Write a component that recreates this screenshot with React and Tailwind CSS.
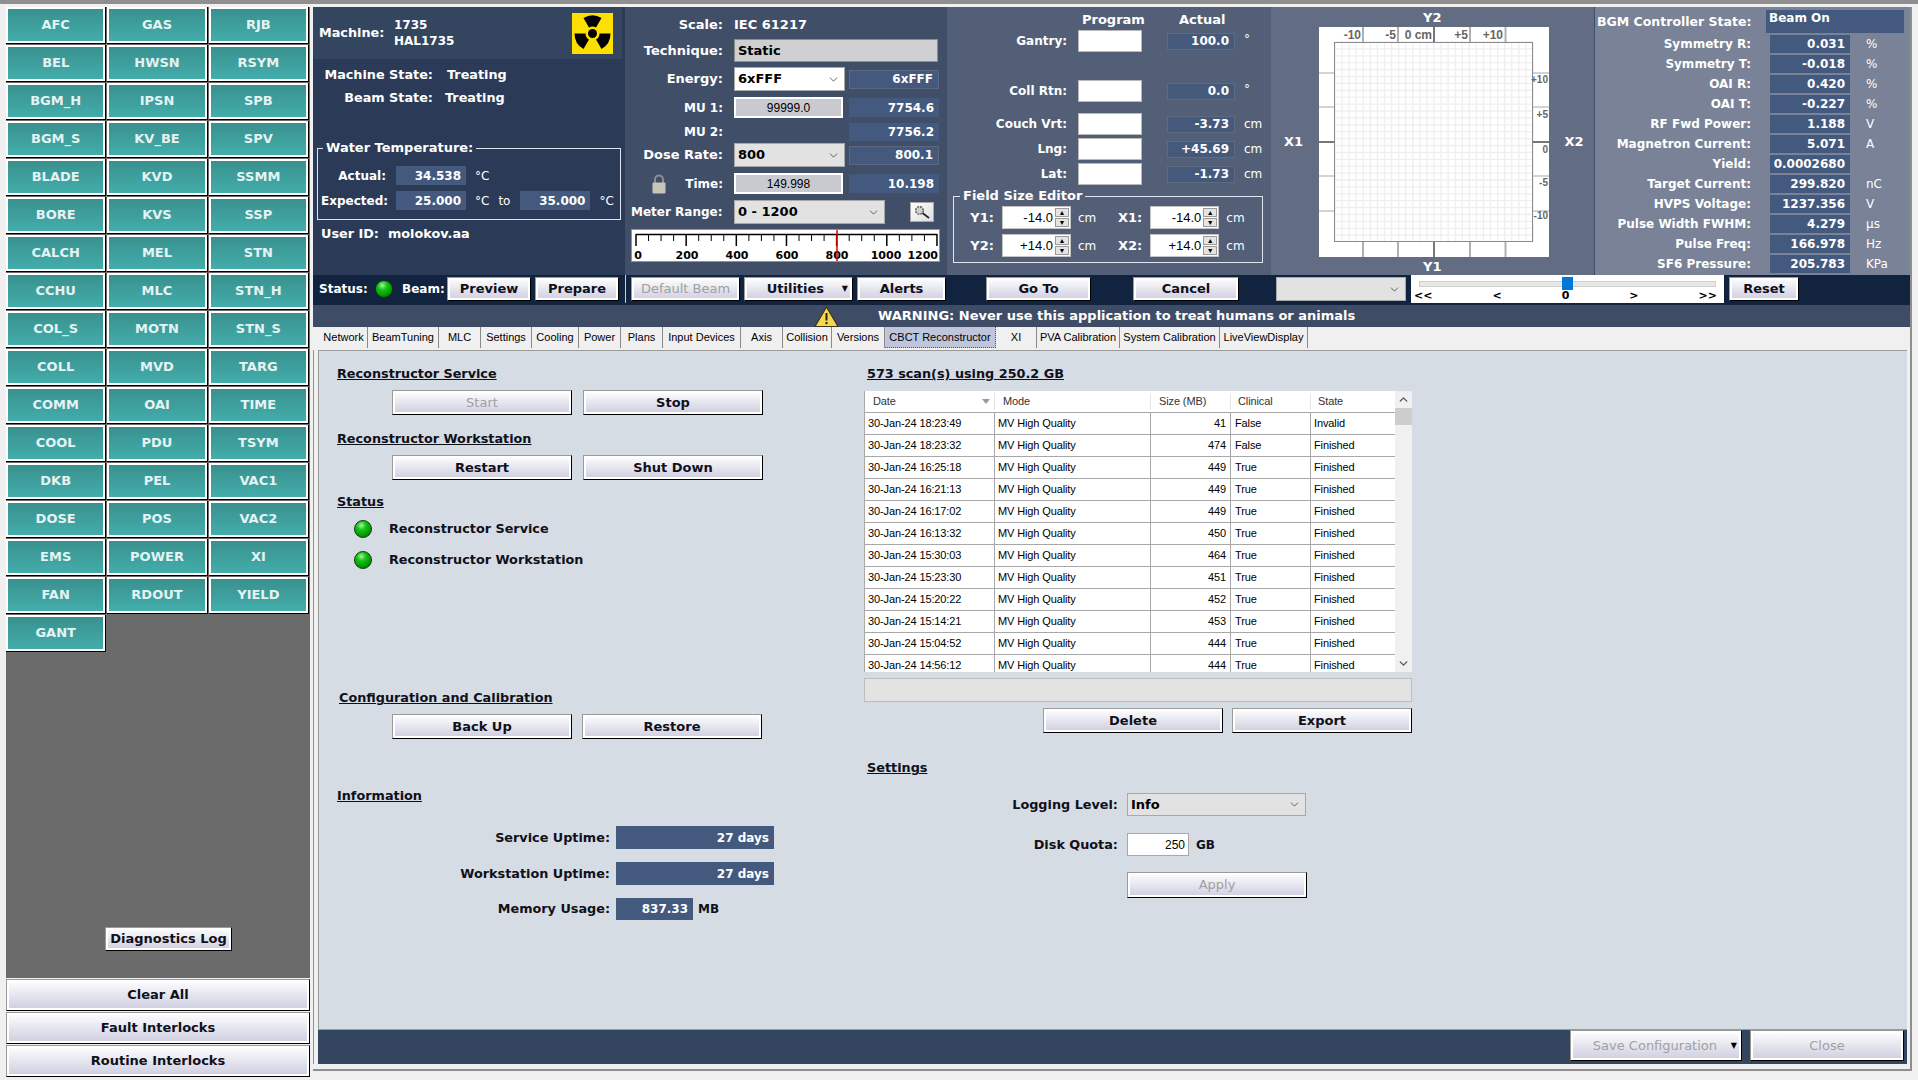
import { ChevronDown, ChevronUp } from "lucide-react";
import React from "react";
import clsx from "clsx";

const interlocks = [
	"AFC", "GAS", "RJB", "BEL", "HWSN", "RSYM", "BGM_H", "IPSN", "SPB", "BGM_S", "KV_BE", "SPV",
	"BLADE", "KVD", "SSMM", "BORE", "KVS", "SSP", "CALCH", "MEL", "STN", "CCHU", "MLC", "STN_H",
	"COL_S", "MOTN", "STN_S", "COLL", "MVD", "TARG", "COMM", "OAI", "TIME", "COOL", "PDU", "TSYM",
	"DKB", "PEL", "VAC1", "DOSE", "POS", "VAC2", "EMS", "POWER", "XI", "FAN", "RDOUT", "YIELD", "GANT",
];

const tabs = [
	["Network", 48], ["BeamTuning", 71], ["MLC", 42], ["Settings", 51], ["Cooling", 47], ["Power", 42],
	["Plans", 42], ["Input Devices", 78], ["Axis", 42], ["Collision", 49], ["Versions", 53],
	["CBCT Reconstructor", 111], ["XI", 41], ["PVA Calibration", 83], ["System Calibration", 100], ["LiveViewDisplay", 88],
];

const scans = [
	["30-Jan-24 18:23:49", "41", "False", "Invalid"],
	["30-Jan-24 18:23:32", "474", "False", "Finished"],
	["30-Jan-24 16:25:18", "449", "True", "Finished"],
	["30-Jan-24 16:21:13", "449", "True", "Finished"],
	["30-Jan-24 16:17:02", "449", "True", "Finished"],
	["30-Jan-24 16:13:32", "450", "True", "Finished"],
	["30-Jan-24 15:30:03", "464", "True", "Finished"],
	["30-Jan-24 15:23:30", "451", "True", "Finished"],
	["30-Jan-24 15:20:22", "452", "True", "Finished"],
	["30-Jan-24 15:14:21", "453", "True", "Finished"],
	["30-Jan-24 15:04:52", "444", "True", "Finished"],
	["30-Jan-24 14:56:12", "444", "True", "Finished"],
];

const bgmRows = [
	["Symmetry R:", "0.031", "%"], ["Symmetry T:", "-0.018", "%"], ["OAI R:", "0.420", "%"], ["OAI T:", "-0.227", "%"],
	["RF Fwd Power:", "1.188", "V"], ["Magnetron Current:", "5.071", "A"], ["Yield:", "0.0002680", ""],
	["Target Current:", "299.820", "nC"], ["HVPS Voltage:", "1237.356", "V"], ["Pulse Width FWHM:", "4.279", "µs"],
	["Pulse Freq:", "166.978", "Hz"], ["SF6 Pressure:", "205.783", "KPa"],
];

const Btn = ({ children, className, disabled }) => (
	<button
		className={clsx(
			"flex shrink-0 items-center justify-center whitespace-nowrap border border-t-[#9a9a9a] border-l-[#9a9a9a] border-r-black border-b-black bg-linear-to-b from-white to-[#cdcde0] text-[13px] font-bold shadow-[inset_0_0_0_2px_#fff]",
			disabled ? "font-normal text-[#a0a0a0]" : "text-[#10101a]",
			className,
		)}
	>
		{children}
	</button>
);

const Led = ({ className }) => (
	<span
		className={clsx(
			"block h-[18px] w-[18px] shrink-0 rounded-full border border-[#0b3b0b] bg-[radial-gradient(circle_at_40%_28%,#a5f5a5_0%,#15c415_30%,#069a06_65%,#045d04_100%)]",
			className,
		)}
	/>
);

const Readout = ({ children, className }) => (
	<div className={clsx("flex shrink-0 items-center justify-end bg-[#43597d] pr-[5px] text-[12px] font-bold text-white", className)}>
		{children}
	</div>
);

const Arrow = ({ className }) => (
	<ChevronDown size={13} strokeWidth={1.5} className={clsx("shrink-0 text-[#444]", className)} />
);

const Combo = ({ value, className, white }) => (
	<div
		className={clsx(
			"flex shrink-0 items-center justify-between border border-[#a8a8a8] pl-[3px] pr-[4px] text-[13px] font-bold text-black",
			white ? "bg-white" : "bg-[#e2e2e2]",
			className,
		)}
	>
		<span>{value}</span>
		<Arrow />
	</div>
);

const Blank = ({ className }) => <div className={clsx("h-[22px] w-[64px] shrink-0 border border-[#b8b8b8] bg-white", className)} />;

const Spin = ({ value }) => (
	<div className="flex h-[23px] w-[69px] shrink-0 items-center justify-end border border-[#c4c4c4] bg-white pr-[1px] font-['Liberation_Sans'] text-[13px] font-normal text-black">
		<span className="mr-[2px]">{value}</span>
		<div className="flex h-[19px] w-[14px] flex-col gap-[1px]">
			<div className="flex flex-1 items-center justify-center border border-[#9a9a9a] bg-[#e4e4e4] text-[7px] leading-none">▲</div>
			<div className="flex flex-1 items-center justify-center border border-[#9a9a9a] bg-[#e4e4e4] text-[7px] leading-none">▼</div>
		</div>
	</div>
);

const RadiationIcon = () => (
	<svg width="41" height="41" viewBox="-20.5 -20.5 41 41" className="shrink-0">
		<rect x="-20.5" y="-20.5" width="41" height="41" fill="#fde000" />
		{[0, 120, 240].map((deg) => (
			<path key={deg} transform={`rotate(${deg})`} d="M-3.5 -6.06 L-9 -15.6 A18 18 0 0 1 9 -15.6 L3.5 -6.06 A7 7 0 0 0 -3.5 -6.06Z" fill="#000" />
		))}
		<circle r="4.5" fill="#000" />
	</svg>
);

const Magnifier = () => (
	<svg width="18" height="14" viewBox="0 0 18 14">
		<circle cx="6.5" cy="5.5" r="3.8" fill="#cfcfcf" stroke="#555" strokeWidth="1.3" strokeDasharray="2 1" />
		<line x1="9.5" y1="8" x2="16" y2="13" stroke="#222" strokeWidth="1.6" />
	</svg>
);

const Ruler = () => {
	const ticks = [];
	for (let i = 0; i <= 24; i++) ticks.push(i);
	return (
		<svg width="309" height="33" className="block border border-[#8d93a3] bg-white">
			<line x1="4" y1="4.5" x2="305" y2="4.5" stroke="#000" strokeWidth="1.5" />
			{ticks.map((i) => {
				const x = 4 + i * 12.54;
				return <line key={i} x1={x} y1="4" x2={x} y2={i % 4 === 0 ? 16 : 11} stroke="#000" strokeWidth={i % 4 === 0 ? 1.5 : 1} />;
			})}
			{[["0", 6], ["200", 55], ["400", 105], ["600", 155], ["800", 205], ["1000", 254]].map(([t, x]) => (
				<text key={t} x={x} y="29" textAnchor="middle" fontSize="11" fontWeight="700" fontFamily="DejaVu Sans">{t}</text>
			))}
			<text x="306" y="29" textAnchor="end" fontSize="11" fontWeight="700" fontFamily="DejaVu Sans">1200</text>
			<line x1="205" y1="0" x2="205" y2="33" stroke="#e00000" strokeWidth="1.5" />
		</svg>
	);
};

const FieldChart = () => {
	const xs = [44, 79, 115, 151, 186.5];
	const ys = [46, 80, 115, 149, 184];
	const grid = [];
	for (let i = 0; i <= 28; i++) {
		grid.push(<line key={`v${i}`} x1={16 + i * 7.07} y1="15" x2={16 + i * 7.07} y2="214" stroke="#efefef" strokeWidth="1.3" />);
		grid.push(<line key={`h${i}`} x1="16" y1={15 + i * 6.9} x2="214" y2={15 + i * 6.9} stroke="#efefef" strokeWidth="1.3" />);
	}
	return (
		<svg width="230" height="230" className="block shrink-0 bg-white">
			{grid}
			<rect x="15.5" y="15.5" width="198" height="199" fill="none" stroke="#8a8a8a" />
			{xs.map((x, i) => (
				<g key={x} stroke={i === 2 ? "#777" : "#b0b0b0"} strokeWidth="2">
					<line x1={x} y1="0" x2={x} y2="15" />
					<line x1={x} y1="215" x2={x} y2="230" />
				</g>
			))}
			{ys.map((y, i) => (
				<g key={y} stroke={i === 2 ? "#777" : "#a8a8a8"} strokeWidth={i === 2 ? 2 : 1}>
					<line x1="0" y1={y} x2="15" y2={y} />
					<line x1="214" y1={y} x2="230" y2={y} />
				</g>
			))}
			<g fontFamily="Liberation Sans" fontSize="12" fill="#666" textAnchor="end">
				<text x="42" y="12">-10</text>
				<text x="77" y="12">-5</text>
				<text x="113" y="12">0 cm</text>
				<text x="149" y="12">+5</text>
				<text x="184" y="12">+10</text>
			</g>
			<g fontFamily="Liberation Sans" fontSize="10" fill="#666" textAnchor="end">
				<text x="229" y="56">+10</text>
				<text x="229" y="91">+5</text>
				<text x="229" y="126">0</text>
				<text x="229" y="159">-5</text>
				<text x="229" y="192">-10</text>
			</g>
		</svg>
	);
};

const MachinePanel = () => (
	<div className="flex h-full w-[312px] shrink-0 flex-col bg-[#2b3b57] text-[12.8px] font-bold text-white">
		<div className="flex h-[52px] w-[309px] items-center bg-[#34455f] pl-[6px] pr-[9px]">
			<span className="w-[75px]">Machine:</span>
			<div className="flex flex-1 flex-col gap-[2px] text-[12px] leading-[14px]">
				<span>1735</span>
				<span>HAL1735</span>
			</div>
			<RadiationIcon />
		</div>
		<div className="mt-[6px] flex h-[20px] items-center">
			<span className="w-[120px] text-right">Machine State:</span>
			<span className="ml-[14px]">Treating</span>
		</div>
		<div className="mt-[3px] flex h-[20px] items-center">
			<span className="w-[120px] text-right">Beam State:</span>
			<span className="ml-[12px]">Treating</span>
		</div>
		<fieldset className="ml-[4px] mt-[32px] h-[80px] w-[304px] border border-[#dfe4ee] pl-[3px] text-[12px]">
			<legend className="ml-[2px] px-[3px] text-[13px] leading-[16px]">Water Temperature:</legend>
			<div className="mt-[10px] flex h-[19px] items-center">
				<span className="w-[65px] text-right">Actual:</span>
				<Readout className="ml-[10px] h-[19px] w-[70px]">34.538</Readout>
				<span className="ml-[9px] font-normal">°C</span>
			</div>
			<div className="mt-[6px] flex h-[19px] items-center">
				<span className="w-[65px] text-right">Expected:</span>
				<Readout className="ml-[10px] h-[19px] w-[70px]">25.000</Readout>
				<span className="ml-[9px] font-normal">°C</span>
				<span className="ml-[9px] font-normal">to</span>
				<Readout className="ml-[10px] h-[19px] w-[70px]">35.000</Readout>
				<span className="ml-[9px] font-normal">°C</span>
			</div>
		</fieldset>
		<div className="ml-[8px] mt-[6px] flex h-[16px] items-center gap-[9px]">
			<span>User ID:</span>
			<span>molokov.aa</span>
		</div>
	</div>
);

const ScaleRow = ({ label, children, className }) => (
	<div className={clsx("flex items-center", className)}>
		<span className="w-[98px] whitespace-nowrap text-right">{label}</span>
		<div className="ml-[11px] flex items-center">{children}</div>
	</div>
);

const ScalePanel = () => (
	<div className="flex h-full w-[322px] shrink-0 flex-col bg-[#414e68] pt-[8px] text-[13px] font-bold text-white">
		<ScaleRow label="Scale:" className="h-[20px]">
			<span>IEC 61217</span>
		</ScaleRow>
		<ScaleRow label="Technique:" className="mt-[4px] h-[23px]">
			<div className="flex h-[23px] w-[204px] items-center border border-[#8e8e8e] bg-[#cfcfd2] pl-[3px] text-black">Static</div>
		</ScaleRow>
		<ScaleRow label="Energy:" className="mt-[5px] h-[24px]">
			<Combo white value="6xFFF" className="h-[24px] w-[111px]" />
			<Readout className="ml-[4px] h-[19px] w-[90px] border border-[#5c6880] bg-[#3e5274]">6xFFF</Readout>
		</ScaleRow>
		<ScaleRow label="MU 1:" className="mt-[6px] h-[21px] text-[12px]">
			<div className="flex h-[21px] w-[109px] items-center justify-center border-2 border-white bg-[#c9cad0] font-['Liberation_Sans'] text-[12px] font-normal text-black">99999.0</div>
			<Readout className="ml-[6px] h-[19px] w-[90px]">7754.6</Readout>
		</ScaleRow>
		<ScaleRow label="MU 2:" className="mt-[5px] h-[18px] text-[12px]">
			<div className="w-[109px]" />
			<Readout className="ml-[6px] h-[18px] w-[90px]">7756.2</Readout>
		</ScaleRow>
		<ScaleRow label="Dose Rate:" className="mt-[2px] h-[24px]">
			<Combo value="800" className="h-[24px] w-[111px]" />
			<Readout className="ml-[4px] h-[19px] w-[90px] border border-[#5c6880] bg-[#3e5274]">800.1</Readout>
		</ScaleRow>
		<div className="mt-[6px] flex h-[21px] items-center text-[12px]">
			<svg width="16" height="20" viewBox="0 0 16 20" className="ml-[26px] shrink-0">
				<path d="M4 9V5.5a4 4 0 0 1 8 0V9" fill="none" stroke="#8d8d8d" strokeWidth="2" />
				<rect x="1.5" y="8.5" width="13" height="11" rx="1" fill="#c9c4b8" />
			</svg>
			<span className="w-[56px] text-right">Time:</span>
			<div className="ml-[11px] flex h-[21px] w-[109px] items-center justify-center border-2 border-white bg-[#c9cad0] font-['Liberation_Sans'] text-[12px] font-normal text-black">149.998</div>
			<Readout className="ml-[6px] h-[19px] w-[90px]">10.198</Readout>
		</div>
		<div className="mt-[6px] flex h-[24px] items-center">
			<span className="ml-[6px] w-[97px] whitespace-nowrap text-[12px]">Meter Range:</span>
			<Combo value="0 - 1200" className="ml-[6px] h-[24px] w-[151px]" />
			<div className="ml-[25px] flex h-[20px] w-[24px] items-center justify-center border border-[#a8a8a8] bg-linear-to-br from-white to-[#dcdcdc]">
				<Magnifier />
			</div>
		</div>
		<div className="ml-[6px] mt-[5px]">
			<Ruler />
		</div>
	</div>
);

const AxisRow = ({ label, value, unit, className }) => (
	<div className={clsx("flex h-[22px] items-center", className)}>
		<span className="w-[120px] text-right">{label}</span>
		<Blank className="ml-[11px]" />
		<Readout className="ml-[25px] h-[17px] w-[68px] border border-[#5d6a80] bg-[#45597b]">{value}</Readout>
		<span className={clsx("ml-[9px] font-normal", unit === "°" && "-mt-[5px]")}>{unit}</span>
	</div>
);

const FieldRow = ({ a, av, b, bv, className }) => (
	<div className={clsx("flex h-[23px] items-center", className)}>
		<span className="w-[30px] text-right text-[13px]">{a}</span>
		<div className="ml-[8px]"><Spin value={av} /></div>
		<span className="ml-[7px] font-normal">cm</span>
		<span className="ml-[16px] w-[30px] text-right text-[13px]">{b}</span>
		<div className="ml-[8px]"><Spin value={bv} /></div>
		<span className="ml-[7px] font-normal">cm</span>
	</div>
);

const AxisPanel = () => (
	<div className="flex h-full w-[324px] shrink-0 flex-col bg-[#525f77] pt-[4px] text-[12px] font-bold text-white">
		<div className="mb-[2px] flex h-[17px] items-center text-[13px]">
			<span className="ml-[135px] w-[62px] text-center">Program</span>
			<span className="ml-[35px] w-[46px] text-center">Actual</span>
		</div>
		<AxisRow label="Gantry:" value="100.0" unit="°" />
		<AxisRow label="Coll Rtn:" value="0.0" unit="°" className="mt-[28px]" />
		<AxisRow label="Couch Vrt:" value="-3.73" unit="cm" className="mt-[11px]" />
		<AxisRow label="Lng:" value="+45.69" unit="cm" className="mt-[3px]" />
		<AxisRow label="Lat:" value="-1.73" unit="cm" className="mt-[3px]" />
		<fieldset className="ml-[6px] mt-[3px] h-[75px] w-[310px] border border-[#dfe4ee] pl-[10px]">
			<legend className="-ml-[4px] px-[3px] text-[13px] leading-[16px]">Field Size Editor</legend>
			<FieldRow a="Y1:" av="-14.0" b="X1:" bv="-14.0" className="mt-[2px]" />
			<FieldRow a="Y2:" av="+14.0" b="X2:" bv="+14.0" className="mt-[5px]" />
		</fieldset>
	</div>
);

const ChartPanel = () => (
	<div className="flex h-full w-[323px] shrink-0 flex-col bg-[#626d84] text-[13px] font-bold text-white">
		<div className="flex h-[20px] items-center pl-[152px] leading-none">Y2</div>
		<div className="flex items-center">
			<span className="w-[48px] pr-[3px] text-center">X1</span>
			<FieldChart />
			<span className="w-[45px] pl-[5px] text-center">X2</span>
		</div>
		<div className="flex h-[18px] items-center pl-[152px] leading-none">Y1</div>
	</div>
);

const BgmPanel = () => (
	<div className="flex h-full flex-1 flex-col border-l border-[#414e68] bg-[#798296] pt-[3px] text-[12px] font-bold text-white">
		<div className="flex h-[23px] items-start">
			<span className="ml-[2px] mt-[3px] w-[169px] whitespace-nowrap text-[12.5px]">BGM Controller State:</span>
			<div className="h-[23px] w-[138px] bg-[#43597d] pl-[3px] leading-[17px]">Beam On</div>
		</div>
		<div className="mt-[2px] flex flex-col gap-[2px]">
			{bgmRows.map(([label, value, unit]) => (
				<div key={label} className="flex h-[18px] items-center">
					<span className="w-[156px] whitespace-nowrap text-right">{label}</span>
					<Readout className="ml-[19px] h-[18px] w-[80px]">{value}</Readout>
					<span className="ml-[16px] font-normal">{unit}</span>
				</div>
			))}
		</div>
	</div>
);

const StatusBar = () => (
	<div className="flex h-[30px] shrink-0 items-center bg-[#12233f] pb-[2px] text-[12px] font-bold text-white">
		<span className="ml-[6px] w-[51px]">Status:</span>
		<Led className="ml-[5px] bg-[radial-gradient(circle_at_40%_28%,#8cf58c_0%,#0fd00f_40%,#05b505_100%)]" />
		<span className="ml-[9px] w-[45px]">Beam:</span>
		<Btn className="h-[24px] w-[84px]">Preview</Btn>
		<Btn className="ml-[4px] h-[24px] w-[84px]">Prepare</Btn>
		<div className="ml-[6px] h-[28px] w-px bg-[#c8d0dc]" />
		<Btn disabled className="ml-[5px] h-[24px] w-[109px]">Default Beam</Btn>
		<Btn className="ml-[4px] h-[24px] w-[109px] pl-[4px]">
			<span className="flex-1 text-center">Utilities</span>
			<span className="mr-[4px] text-[8px]">▼</span>
		</Btn>
		<Btn className="ml-[4px] h-[24px] w-[89px]">Alerts</Btn>
		<Btn className="ml-[40px] h-[24px] w-[105px]">Go To</Btn>
		<Btn className="ml-[42px] h-[24px] w-[106px]">Cancel</Btn>
		<Combo value="" className="ml-[37px] h-[24px] w-[130px]" />
		<div className="ml-[5px] flex h-[28px] w-[313px] flex-col bg-white pl-[3px] pr-[4px] pt-[2px] text-black">
			<div className="relative ml-[5px] mr-[4px] mt-[4px] h-[6px] border border-[#cfcfcf] bg-[#e7e7e7]">
				<div className="absolute -top-[5px] left-[142px] h-[13px] w-[11px] bg-[#0078d7]" />
			</div>
			<div className="mt-[3px] flex justify-between pr-[3px] text-[11px] leading-[12px]">
				<span>&lt;&lt;</span>
				<span>&lt;</span>
				<span>0</span>
				<span>&gt;</span>
				<span>&gt;&gt;</span>
			</div>
		</div>
		<Btn className="ml-[5px] h-[24px] w-[70px]">Reset</Btn>
	</div>
);

const WarningBar = () => (
	<div className="flex h-[22px] shrink-0 items-end bg-[#3f4c66] text-[13px] font-bold text-white">
		<svg width="25" height="21" viewBox="0 0 25 21" className="ml-[501px] shrink-0">
			<path d="M12.5 1 L24 20.5 H1 Z" fill="#f5d94a" stroke="#3a3520" strokeWidth="1.2" />
			<rect x="11.5" y="7" width="2" height="7.5" fill="#222" />
			<rect x="11.5" y="16" width="2" height="2.2" fill="#222" />
		</svg>
		<span className="ml-[39px] self-center whitespace-nowrap">WARNING: Never use this application to treat humans or animals</span>
	</div>
);

const TabBar = () => (
	<div className="flex h-[23px] shrink-0 items-stretch bg-[#f0f0f0] pb-[2px] pl-[7px] font-['Liberation_Sans'] text-[11px] font-normal text-black">
		{tabs.map(([name, width]) => (
			<div
				key={name}
				style={{ width }}
				className={clsx(
					"flex shrink-0 items-center justify-center whitespace-nowrap border-r border-[#8a8a8a]",
					name === "CBCT Reconstructor" && "border-b border-dotted border-[#555] bg-[#bfc6dc]",
				)}
			>
				{name}
			</div>
		))}
	</div>
);

const Heading = ({ children, className }) => (
	<div className={clsx("h-[16px] text-[12.8px] font-bold leading-[16px] text-[#10101a] underline", className)}>{children}</div>
);

const InfoRow = ({ label, value, width, unit, className }) => (
	<div className={clsx("flex items-center text-[12.8px] font-bold text-[#10101a]", className)}>
		<span className="w-[273px] text-right">{label}</span>
		<Readout className={clsx("ml-[6px] h-full", width)}>{value}</Readout>
		{unit && <span className="ml-[5px] text-[12px]">{unit}</span>}
	</div>
);

const LeftContent = () => (
	<div className="flex w-[548px] shrink-0 flex-col pl-[18px] pt-[15px]">
		<Heading>Reconstructor Service</Heading>
		<div className="ml-[55px] mt-[8px] flex gap-[11px]">
			<Btn disabled className="h-[25px] w-[180px]">Start</Btn>
			<Btn className="h-[25px] w-[180px]">Stop</Btn>
		</div>
		<Heading className="mt-[16px]">Reconstructor Workstation</Heading>
		<div className="ml-[55px] mt-[8px] flex gap-[11px]">
			<Btn className="h-[25px] w-[180px]">Restart</Btn>
			<Btn className="h-[25px] w-[180px]">Shut Down</Btn>
		</div>
		<Heading className="mt-[14px]">Status</Heading>
		<div className="ml-[17px] mt-[10px] flex h-[18px] items-center gap-[17px] text-[12.8px] font-bold text-[#10101a]">
			<Led />
			<span>Reconstructor Service</span>
		</div>
		<div className="ml-[17px] mt-[13px] flex h-[18px] items-center gap-[17px] text-[12.8px] font-bold text-[#10101a]">
			<Led />
			<span>Reconstructor Workstation</span>
		</div>
		<Heading className="ml-[2px] mt-[121px]">Configuration and Calibration</Heading>
		<div className="ml-[55px] mt-[8px] flex gap-[10px]">
			<Btn className="h-[25px] w-[180px]">Back Up</Btn>
			<Btn className="h-[25px] w-[180px]">Restore</Btn>
		</div>
		<Heading className="mt-[49px]">Information</Heading>
		<InfoRow label="Service Uptime:" value="27 days" width="w-[158px]" className="mt-[22px] h-[23px]" />
		<InfoRow label="Workstation Uptime:" value="27 days" width="w-[158px]" className="mt-[13px] h-[23px]" />
		<InfoRow label="Memory Usage:" value="837.33" width="w-[77px]" unit="MB" className="mt-[13px] h-[22px]" />
	</div>
);

const ScanTable = () => (
	<div className="ml-[-3px] mt-[9px] flex h-[281px] w-[548px] overflow-hidden bg-white font-['Liberation_Sans'] text-[11px] font-normal tracking-[-0.12px] text-black">
		<div className="w-[531px] shrink-0 border-l border-[#a8a8a8]">
			<div className="flex h-[22px] items-center border-b border-[#a8a8a8] text-[#333]">
				<div className="flex w-[129px] items-center justify-between pl-[8px] pr-[4px]">
					<span>Date</span>
					<span className="h-0 w-0 border-x-[4px] border-t-[5px] border-x-transparent border-t-[#999]" />
				</div>
				<div className="w-[156px] border-l border-[#e4e4e4] pl-[8px]">Mode</div>
				<div className="w-[80px] border-l border-[#e4e4e4] pl-[8px]">Size (MB)</div>
				<div className="w-[80px] border-l border-[#e4e4e4] pl-[7px]">Clinical</div>
				<div className="flex-1 border-l border-[#e4e4e4] pl-[7px]">State</div>
			</div>
			{scans.map(([date, size, clinical, state]) => (
				<div key={date} className="flex h-[22px] items-center border-b border-[#a8a8a8]">
					<div className="flex h-full w-[129px] items-center pl-[3px]">{date}</div>
					<div className="flex h-full w-[156px] items-center border-l border-[#a8a8a8] pl-[3px]">MV High Quality</div>
					<div className="flex h-full w-[80px] items-center justify-end border-l border-[#a8a8a8] pr-[4px]">{size}</div>
					<div className="flex h-full w-[80px] items-center border-l border-[#a8a8a8] pl-[4px]">{clinical}</div>
					<div className="flex h-full flex-1 items-center border-l border-[#a8a8a8] pl-[3px]">{state}</div>
				</div>
			))}
		</div>
		<div className="flex w-[17px] shrink-0 flex-col items-center bg-[#f0f0f0]">
			<ChevronUp size={13} strokeWidth={2.5} className="my-[2px] h-[13px] text-[#555]" />
			<div className="h-[17px] w-full bg-[#cdcdcd]" />
			<div className="flex-1" />
			<ChevronDown size={13} strokeWidth={2.5} className="my-[2px] h-[13px] text-[#555]" />
		</div>
	</div>
);

const RightContent = () => (
	<div className="flex flex-col pt-[15px]">
		<Heading>573 scan(s) using 250.2 GB</Heading>
		<ScanTable />
		<div className="ml-[-3px] mt-[6px] h-[24px] w-[548px] border border-[#bdbdbd] bg-[#e3e3e3]" />
		<div className="mt-[6px] flex w-[545px] justify-end gap-[9px]">
			<Btn className="h-[25px] w-[180px]">Delete</Btn>
			<Btn className="h-[25px] w-[180px]">Export</Btn>
		</div>
		<Heading className="mt-[27px]">Settings</Heading>
		<div className="mt-[17px] flex h-[23px] items-center text-[12.8px] font-bold text-[#10101a]">
			<span className="w-[251px] text-right">Logging Level:</span>
			<Combo value="Info" className="ml-[9px] h-[23px] w-[179px]" />
		</div>
		<div className="mt-[17px] flex h-[23px] items-center text-[12.8px] font-bold text-[#10101a]">
			<span className="w-[251px] text-right">Disk Quota:</span>
			<div className="ml-[9px] flex h-[23px] w-[62px] items-center justify-end border border-[#a8a8a8] bg-white pr-[3px] font-['Liberation_Sans'] text-[12px] font-normal text-black">250</div>
			<span className="ml-[7px] text-[12px]">GB</span>
		</div>
		<Btn disabled className="ml-[260px] mt-[16px] h-[26px] w-[180px]">Apply</Btn>
	</div>
);

const App = () => (
	<div className="flex h-[1080px] w-[1918px] overflow-hidden border-t-[4px] border-[#8f8f8f] bg-[#f0f0f0] pl-[6px] pt-[3px] font-['DejaVu_Sans','Liberation_Sans',sans-serif]">
		<div className="flex h-[1070px] w-[304px] shrink-0 flex-col">
			<div className="flex flex-1 flex-col bg-[#6b6b6b]">
				<div className="grid w-[303px] grid-cols-3 gap-x-[1px] gap-y-[1px]">
					{interlocks.map((name) => (
						<button
							key={name}
							className="flex h-[37px] items-center justify-center border-r border-b border-black bg-linear-to-b from-[#388f8c] to-[#44afad] text-[13px] font-bold text-[#e4f3f3] shadow-[inset_0_0_0_2px_#fff]"
						>
							{name}
						</button>
					))}
				</div>
				<div className="flex flex-1 items-end justify-center pb-[27px] pl-[21px]">
					<Btn className="h-[24px] w-[127px]">Diagnostics Log</Btn>
				</div>
			</div>
			<div className="mt-[1px] flex flex-col gap-[1px]">
				<Btn className="h-[32px] w-full">Clear All</Btn>
				<Btn className="h-[32px] w-full">Fault Interlocks</Btn>
				<Btn className="h-[32px] w-full">Routine Interlocks</Btn>
			</div>
		</div>
		<div className="ml-[3px] flex h-[1064px] w-[1599px] shrink-0 flex-col border-r-2 border-b-2 border-[#8f8f8f] pb-[5px]">
			<div className="flex h-[268px] shrink-0">
				<MachinePanel />
				<ScalePanel />
				<AxisPanel />
				<ChartPanel />
				<BgmPanel />
			</div>
			<StatusBar />
			<WarningBar />
			<TabBar />
			<div className="flex flex-1 flex-col border-l border-[#8f8f8f] pl-[4px] pr-[3px]">
				<div className="flex flex-1 border-t border-l border-[#9a9a9a] bg-[#d5dce4]">
					<LeftContent />
					<RightContent />
				</div>
				<div className="flex h-[35px] shrink-0 justify-end gap-[8px] border-t border-[#9a9a9a] bg-[#34465f] pr-[3px]">
					<Btn disabled className="h-[31px] w-[172px] pl-[8px]">
						<span className="flex-1 text-center">Save Configuration</span>
						<span className="mr-[4px] text-[8px] text-black">▼</span>
					</Btn>
					<Btn disabled className="h-[31px] w-[154px]">Close</Btn>
				</div>
			</div>
		</div>
	</div>
);

export default App;
